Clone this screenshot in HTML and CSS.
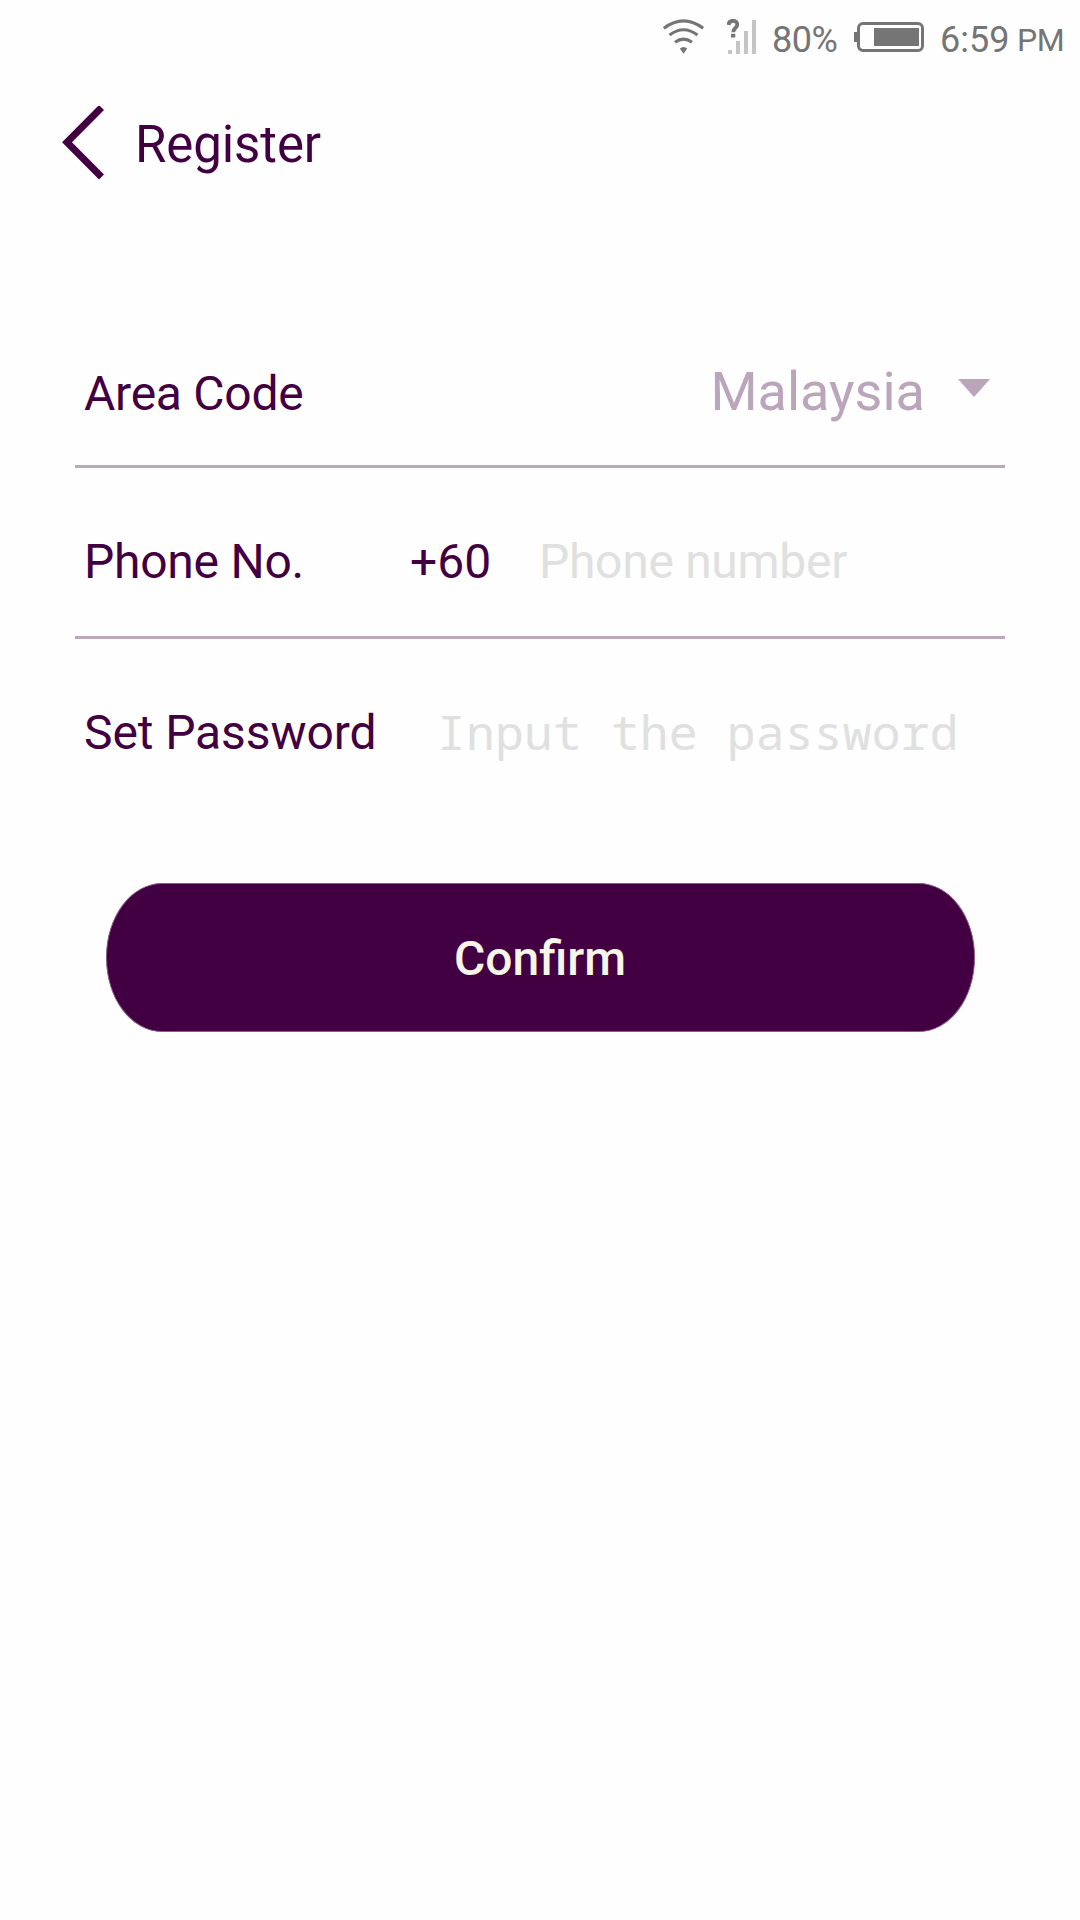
FILE: index.html
```html
<!DOCTYPE html>
<html lang="en">
<head>
    <meta charset="utf-8">
    <title>Register</title>
    <link rel="stylesheet" href="styles.css">
</head>
<body>
    <div class="status-bar">
        <svg class="wifi" width="42" height="36" viewBox="0 0 42 36" fill="none" stroke="#757575" stroke-width="3">
            <path d="M.8 9.300Q20.500 -5.500 40.200 9.300M6.500 16Q20.500 5.500 34.500 16M12 23.200Q20.500 17 29 23.200"/>
            <path d="M16.800 29.500Q20.500 26.500 24.200 29.500L20.500 34.800Z" fill="#757575" stroke="none"/>
        </svg>
        <svg class="signal" width="30" height="36" viewBox="0 0 30 36">
            <path fill="#c4c4c4" d="M1 31h4v4H1zM9 22h4v13h-4zM17 12h4v23h-4zM25 1h4v34h-4z"/>
            <path fill="none" stroke="#757575" stroke-width="3.800" d="M1.500 6C2 .3 10.300 .6 10.300 5.500C10.300 9.200 6.200 8.800 6.200 13.300"/>
            <path fill="#757575" d="M4 14.800h4.300v3.700H4z"/>
        </svg>
        <span class="percent">80%</span>
        <svg class="battery" width="70" height="30" viewBox="0 0 70 30">
            <rect x="4.500" y="1.500" width="64" height="27" rx="4.500" fill="none" stroke="#757575" stroke-width="3"/>
            <path fill="#757575" d="M0 10h4v10H0zM20 6h45v18H20z"/>
        </svg>
        <span class="time">6:59</span>
        <span class="ampm">PM</span>
    </div>

    <div class="title-bar">
        <svg class="back" width="42" height="76" viewBox="0 0 42 76" fill="none" stroke="#420042" stroke-width="7">
            <path d="M39.500 1.500L5 36.300L39.500 71"/>
        </svg>
        <h1>Register</h1>
    </div>

    <form class="register">
        <div class="row area">
            <span class="label">Area Code</span>
            <span class="country">Malaysia</span>
            <svg class="arrow" width="32" height="18" viewBox="0 0 32 18"><path fill="#bba5bb" d="M0 0h32L16 18z"/></svg>
        </div>
        <div class="row phone">
            <label class="label" for="phone">Phone No.</label>
            <span class="prefix">+60</span>
            <input type="tel" id="phone" placeholder="Phone number">
        </div>
        <div class="row password">
            <label class="label" for="password">Set Password</label>
            <input type="text" id="password" placeholder="Input the password">
        </div>
        <button type="button">Confirm</button>
    </form>
</body>
</html>
```

FILE: styles.css
```css
* { box-sizing: border-box; }
body {
    margin: 0;
    min-height: 1920px;
    background: #fefefe;
    color: #420042;
    font-family: Roboto, sans-serif;
}
svg { display: block; flex: none; }

.status-bar {
    display: flex;
    height: 80px;
    padding-left: 663px;
    color: #757575;
    font-size: 36px;
    line-height: 80px;
    white-space: nowrap;
}
.wifi { margin-top: 19px; }
.signal { margin: 19px 0 0 22px; }
.percent { width: 82px; margin-left: 15px; letter-spacing: -0.5px; }
.battery { margin-top: 22px; }
.time { width: 77px; margin-left: 16px; }
.ampm { font-size: 32px; line-height: 81px; letter-spacing: -0.5px; }

.title-bar {
    display: flex;
    align-items: center;
    height: 128px;
    padding-left: 62px;
}
.title-bar .back { margin-top: -1px; }
.title-bar h1 {
    margin: 2px 0 0 31px;
    font-size: 51px;
    font-weight: 400;
    line-height: 60px;
    letter-spacing: -0.1px;
}

.register { padding: 111px 75px 0; }
.row {
    display: flex;
    align-items: center;
    padding: 0 9px;
    border-bottom: 3px solid #bba8b9;
    font-size: 48px;
    line-height: 60px;
    white-space: nowrap;
}
.area { height: 149px; padding-top: 4px; }
.phone { height: 171px; padding-top: 19px; }
.password { height: 187px; border-bottom: none; }
.country {
    margin: 0 33px 4px auto;
    color: #bba5bb;
    font-size: 54px;
}
.arrow { margin: 0 6px 13px 0; }
.label { flex: none; letter-spacing: -0.25px; }
.phone .label { width: 326px; }
.password .label { width: 353px; letter-spacing: -0.1px; }
.prefix { width: 129px; }
.row input {
    flex: 1;
    min-width: 0;
    padding: 0;
    border: none;
    outline: none;
    background: none;
    color: inherit;
    font: inherit;
    letter-spacing: -0.3px;
}
.row input::placeholder { color: #e0e0e0; opacity: 1; }
.password input {
    margin-bottom: 2px;
    font-family: "Noto Sans Mono", "DejaVu Sans Mono", monospace;
    letter-spacing: 0.18px;
}

button {
    display: block;
    width: 869px;
    height: 149px;
    margin: 57px 0 0 31px;
    padding: 2px 1px 0 0;
    border: 1px solid #856085;
    border-radius: 56px / 74px;
    background: #420042;
    color: #f5f5e8;
    font: 500 48px/60px Roboto, sans-serif;
}
```
